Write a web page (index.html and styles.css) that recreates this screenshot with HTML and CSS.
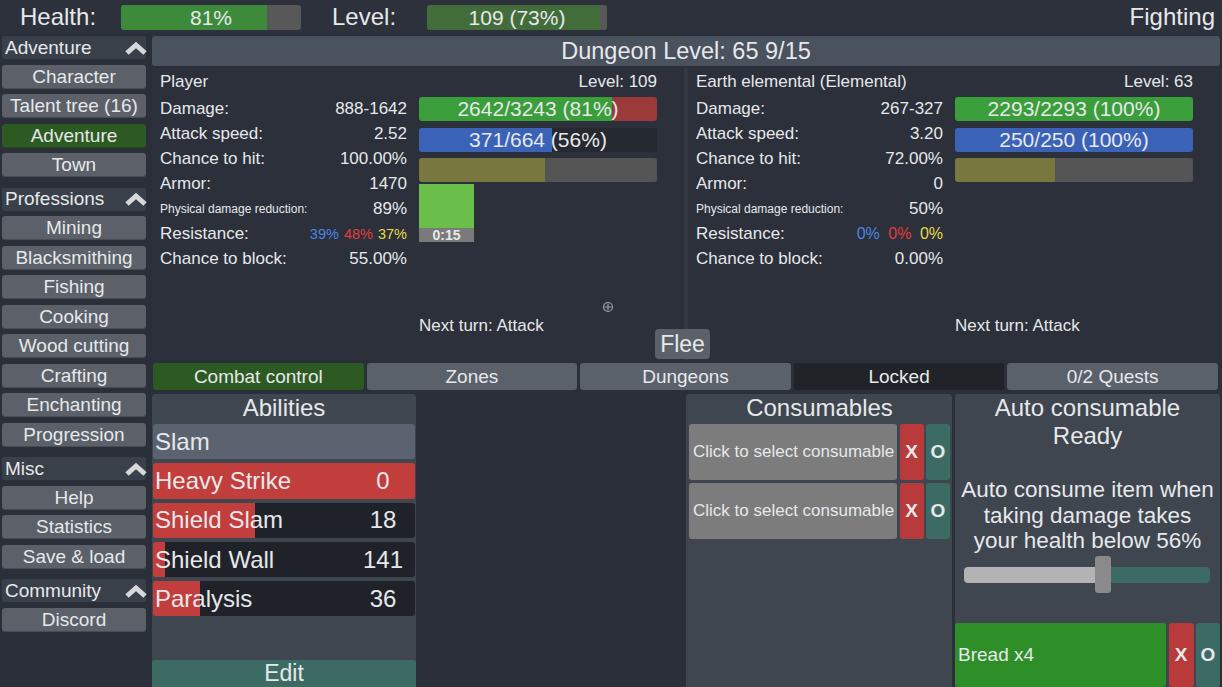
FILE: index.html
```html
<!DOCTYPE html>
<html lang="en">
<head>
    <meta charset="UTF-8">
    <title>Dungeon</title>
    <link rel="stylesheet" href="styles.css">
</head>
<body>
    <header class="topbar">
        <span class="top-label">Health:</span>
        <div class="top-bar"><div class="top-fill health" style="width: 81%"></div><span>81%</span></div>
        <span class="top-label level-label">Level:</span>
        <div class="top-bar"><div class="top-fill level" style="width: 96%"></div><span>109 (73%)</span></div>
        <span class="status">Fighting</span>
    </header>

    <div class="layout">
        <nav class="sidebar">
            <div class="side-head">Adventure <svg class="chevron" viewBox="0 0 24 14"><polyline points="3,12 12,4 21,12"/></svg></div>
            <button class="side-btn">Character</button>
            <button class="side-btn">Talent tree (16)</button>
            <button class="side-btn active">Adventure</button>
            <button class="side-btn">Town</button>

            <div class="side-head">Professions <svg class="chevron" viewBox="0 0 24 14"><polyline points="3,12 12,4 21,12"/></svg></div>
            <button class="side-btn">Mining</button>
            <button class="side-btn">Blacksmithing</button>
            <button class="side-btn">Fishing</button>
            <button class="side-btn">Cooking</button>
            <button class="side-btn">Wood cutting</button>
            <button class="side-btn">Crafting</button>
            <button class="side-btn">Enchanting</button>
            <button class="side-btn">Progression</button>

            <div class="side-head">Misc <svg class="chevron" viewBox="0 0 24 14"><polyline points="3,12 12,4 21,12"/></svg></div>
            <button class="side-btn">Help</button>
            <button class="side-btn">Statistics</button>
            <button class="side-btn">Save &amp; load</button>

            <div class="side-head">Community <svg class="chevron" viewBox="0 0 24 14"><polyline points="3,12 12,4 21,12"/></svg></div>
            <button class="side-btn">Discord</button>
        </nav>

        <main class="content">
            <div class="dungeon-title">Dungeon Level: 65 9/15</div>

            <section class="combat">
                <div class="fighter player">
                    <div class="fighter-head"><span>Player</span><span>Level: 109</span></div>
                    <div class="fighter-body">
                        <div class="stats">
                            <div class="stat"><span>Damage:</span><span>888-1642</span></div>
                            <div class="stat"><span>Attack speed:</span><span>2.52</span></div>
                            <div class="stat"><span>Chance to hit:</span><span>100.00%</span></div>
                            <div class="stat"><span>Armor:</span><span>1470</span></div>
                            <div class="stat"><span class="small">Physical damage reduction:</span><span>89%</span></div>
                            <div class="stat"><span>Resistance:</span><span class="res"><b class="cold">39%</b> <b class="fire">48%</b> <b class="light">37%</b></span></div>
                            <div class="stat"><span>Chance to block:</span><span>55.00%</span></div>
                        </div>
                        <div class="bars">
                            <div class="bar hp-lost" style="--fill: 81%">2642/3243 (81%)</div>
                            <div class="bar mana" style="--fill: 56%">371/664 (56%)</div>
                            <div class="bar swing" style="--fill: 53%"></div>
                            <div class="timer">
                                <div class="timer-fill"></div>
                                <div class="timer-label">0:15</div>
                            </div>
                            <div class="next-turn">Next turn: Attack</div>
                        </div>
                    </div>
                    <svg class="cursor" viewBox="0 0 12 12"><circle cx="6" cy="6" r="4.5"/><path d="M6 2.5v7M2.5 6h7"/></svg>
                </div>

                <div class="fighter enemy">
                    <div class="fighter-head"><span>Earth elemental (Elemental)</span><span>Level: 63</span></div>
                    <div class="fighter-body">
                        <div class="stats">
                            <div class="stat"><span>Damage:</span><span>267-327</span></div>
                            <div class="stat"><span>Attack speed:</span><span>3.20</span></div>
                            <div class="stat"><span>Chance to hit:</span><span>72.00%</span></div>
                            <div class="stat"><span>Armor:</span><span>0</span></div>
                            <div class="stat"><span class="small">Physical damage reduction:</span><span>50%</span></div>
                            <div class="stat"><span>Resistance:</span><span class="res wide"><b class="cold">0%</b> <b class="fire">0%</b> <b class="light">0%</b></span></div>
                            <div class="stat"><span>Chance to block:</span><span>0.00%</span></div>
                        </div>
                        <div class="bars">
                            <div class="bar hp-lost" style="--fill: 100%">2293/2293 (100%)</div>
                            <div class="bar mana" style="--fill: 100%">250/250 (100%)</div>
                            <div class="bar swing" style="--fill: 42%"></div>
                            <div class="next-turn">Next turn: Attack</div>
                        </div>
                    </div>
                </div>

                <button class="flee">Flee</button>
            </section>

            <div class="tabs">
                <button class="tab active">Combat control</button>
                <button class="tab">Zones</button>
                <button class="tab">Dungeons</button>
                <button class="tab locked">Locked</button>
                <button class="tab">0/2 Quests</button>
            </div>

            <section class="bottom">
                <div class="panel abilities">
                    <h2>Abilities</h2>
                    <div class="ability current"><span>Slam</span></div>
                    <div class="ability" style="--fill: 100%"><span>Heavy Strike</span><span class="cd">0</span></div>
                    <div class="ability" style="--fill: 39%"><span>Shield Slam</span><span class="cd">18</span></div>
                    <div class="ability" style="--fill: 4.6%"><span>Shield Wall</span><span class="cd">141</span></div>
                    <div class="ability" style="--fill: 18%"><span>Paralysis</span><span class="cd">36</span></div>
                    <button class="edit">Edit</button>
                </div>

                <div class="panel consumables">
                    <h2>Consumables</h2>
                    <div class="slot">
                        <button class="slot-item">Click to select consumable</button>
                        <button class="slot-x">X</button>
                        <button class="slot-o">O</button>
                    </div>
                    <div class="slot">
                        <button class="slot-item">Click to select consumable</button>
                        <button class="slot-x">X</button>
                        <button class="slot-o">O</button>
                    </div>
                </div>

                <div class="panel auto">
                    <h2>Auto consumable<br>Ready</h2>
                    <p class="auto-text">Auto consume item when<br>taking damage takes<br>your health below 56%</p>
                    <div class="slider" style="--fill: 55%">
                        <div class="slider-handle"></div>
                    </div>
                    <div class="slot bread">
                        <button class="slot-item">Bread x4</button>
                        <button class="slot-x">X</button>
                        <button class="slot-o">O</button>
                    </div>
                </div>
            </section>
        </main>
    </div>
</body>
</html>
```

FILE: styles.css
```css
* {
    box-sizing: border-box;
}
body {
    margin: 0;
    width: 1222px;
    height: 687px;
    overflow: hidden;
    background-color: #2a2f39;
    color: #e6e8ea;
    font-family: "Liberation Sans", Arial, sans-serif;
}
button {
    font-family: inherit;
    color: inherit;
    border: none;
    padding: 0;
    cursor: pointer;
}

/* top bar */
.topbar {
    height: 34px;
    display: flex;
    align-items: center;
    padding: 0 7px 0 20px;
    font-size: 24px;
    background-color: #2c313b;
}
.top-label {
    width: 101px;
}
.level-label {
    width: 95px;
    margin-left: 31px;
}
.top-bar {
    position: relative;
    width: 180px;
    height: 25px;
    margin-top: 1px;
    background-color: #585858;
    border-radius: 3px;
    overflow: hidden;
    display: flex;
    align-items: center;
    justify-content: center;
    font-size: 21px;
}
.top-fill {
    position: absolute;
    left: 0;
    top: 0;
    bottom: 0;
}
.top-fill.health {
    background-color: #3d8b3a;
}
.top-fill.level {
    background-color: #426c3a;
}
.top-bar span {
    position: relative;
}
.status {
    margin-left: auto;
}

/* layout */
.layout {
    display: flex;
    height: 653px;
}
.sidebar {
    width: 150px;
    padding: 2px 4px 0 2px;
    display: flex;
    flex-direction: column;
}
.side-head {
    height: 23px;
    margin-top: 10.5px;
    padding-left: 3px;
    display: flex;
    align-items: center;
    justify-content: space-between;
    font-size: 19px;
    background-color: #3a404a;
    border-radius: 2px;
}
.side-head:first-child {
    margin-top: 0;
}
.chevron {
    width: 24px;
    height: 14px;
    margin-right: -2px;
}
.chevron polyline {
    fill: none;
    stroke: #d6d8da;
    stroke-width: 5;
    stroke-linejoin: miter;
}
.side-btn {
    height: 24px;
    margin-top: 5.5px;
    font-size: 19px;
    background-color: #5b6069;
    border-radius: 3px;
    box-shadow: inset 0 -1px 0 rgba(0, 0, 0, 0.2);
}
.side-btn.active {
    background-color: #2d5a22;
}

.content {
    width: 1068px;
    margin-left: 2px;
    display: flex;
    flex-direction: column;
}
.dungeon-title {
    height: 30px;
    margin-top: 2px;
    display: flex;
    align-items: center;
    justify-content: center;
    font-size: 23.5px;
    background-color: #4a525e;
    border-radius: 3px;
}

/* combat */
.combat {
    position: relative;
    height: 292px;
    margin-top: 2px;
    display: flex;
    gap: 4px;
    background-color: #343a45;
}
.fighter {
    position: relative;
    flex: 1;
    padding: 0 27px 0 8px;
    display: flex;
    flex-direction: column;
    background-color: #2b303a;
    font-size: 17px;
}
.fighter-head {
    height: 27px;
    display: flex;
    align-items: center;
    justify-content: space-between;
}
.fighter-body {
    flex: 1;
    display: flex;
}
.stats {
    width: 247px;
    padding-top: 1px;
}
.stat {
    height: 25px;
    display: flex;
    align-items: center;
    justify-content: space-between;
}
.stat .small {
    font-size: 12px;
}
.res {
    font-size: 14.5px;
    word-spacing: 1px;
}
.res.wide {
    font-size: 16px;
    word-spacing: 4px;
}
.res b {
    font-weight: normal;
}
.cold {
    color: #4a86e2;
}
.fire {
    color: #e23c3c;
}
.light {
    color: #e6da48;
}
.bars {
    width: 238px;
    margin-left: 12px;
    padding-top: 2px;
    display: flex;
    flex-direction: column;
}
.bar {
    height: 24px;
    margin-bottom: 6.5px;
    display: flex;
    align-items: center;
    justify-content: center;
    font-size: 21px;
    border-radius: 3px;
}
.bar.hp-lost {
    background: linear-gradient(to right, #3a9e3a var(--fill), #9a3a3a var(--fill));
}
.bar.mana {
    background: linear-gradient(to right, #3a62b6 var(--fill), #252a30 var(--fill));
}
.bar.swing {
    background: linear-gradient(to right, #77773f var(--fill), #545454 var(--fill));
}
.timer {
    width: 55px;
    margin-top: -4.5px;
}
.timer-fill {
    height: 44px;
    background-color: #6abf4b;
}
.timer-label {
    height: 14px;
    line-height: 14px;
    text-align: center;
    font-size: 14px;
    font-weight: bold;
    background-color: #7a7a7a;
}
.next-turn {
    margin-top: auto;
    margin-bottom: 24px;
    line-height: 20px;
}
.cursor {
    position: absolute;
    left: 450px;
    top: 233px;
    width: 12px;
    height: 12px;
}
.cursor circle, .cursor path {
    fill: none;
    stroke: #9aa0a8;
    stroke-width: 1.2;
}
.flee {
    position: absolute;
    left: 503px;
    top: 261px;
    width: 55px;
    height: 30px;
    font-size: 23px;
    background-color: #5b6069;
    border-radius: 4px;
}

/* tabs */
.tabs {
    height: 27px;
    margin-top: 3px;
    padding: 0 2px 0 1px;
    display: flex;
    gap: 3px;
}
.tab {
    flex: 1;
    font-size: 19px;
    background-color: #5a616b;
    border-radius: 3px;
}
.tab.active {
    background-color: #2d5a22;
}
.tab.locked {
    background-color: #202428;
}

/* bottom panels */
.bottom {
    flex: 1;
    margin-top: 4px;
    display: flex;
}
.panel {
    display: flex;
    flex-direction: column;
    background-color: #3f464f;
    border-radius: 3px 3px 0 0;
}
.panel h2 {
    margin: 0;
    font-size: 24px;
    font-weight: normal;
    line-height: 28px;
    text-align: center;
}
.abilities {
    width: 264px;
    margin-right: auto;
}
.abilities h2 {
    height: 30px;
}
.ability {
    height: 35.3px;
    margin: 0 1px 4px;
    display: flex;
    align-items: center;
    justify-content: space-between;
    padding-left: 2px;
    font-size: 24px;
    border-radius: 3px;
    background: linear-gradient(to right, #c23e3d var(--fill), #1f2329 var(--fill));
}
.ability.current {
    background: #5b6371;
}
.cd {
    width: 40px;
    margin-right: 12px;
    text-align: center;
}
.edit {
    margin-top: auto;
    height: 27px;
    font-size: 23px;
    background-color: #3c6b64;
    border-radius: 3px 3px 0 0;
}

.consumables {
    width: 266px;
    padding: 0 2px 0 3px;
}
.consumables h2 {
    height: 30px;
}
.slot {
    height: 56px;
    margin-bottom: 3px;
    display: flex;
}
.slot-item {
    flex: 1;
    text-align: left;
    padding-left: 4px;
    font-size: 17px;
    background-color: #7c7c7c;
    border-radius: 3px;
}
.slot-x, .slot-o {
    width: 24px;
    margin-left: 2.5px;
    font-size: 19px;
    font-weight: bold;
    border-radius: 3px;
}
.slot-x {
    background-color: #b83a3a;
}
.slot-o {
    background-color: #3c6b64;
}

.auto {
    width: 265px;
    margin-left: 3px;
}
.auto-text {
    margin: 27px 0 0;
    font-size: 22.5px;
    line-height: 25.5px;
    text-align: center;
    white-space: nowrap;
}
.slider {
    position: relative;
    height: 16px;
    margin: 13px 10px 0 9px;
    border-radius: 4px;
    background: linear-gradient(to right, #b3b3b3 var(--fill), #3c6a64 var(--fill));
}
.slider-handle {
    position: absolute;
    left: calc(var(--fill) - 4px);
    top: -11px;
    width: 16px;
    height: 37px;
    background-color: #8a8a8a;
    border-radius: 3px;
}
.bread {
    margin-top: auto;
    margin-bottom: 0;
    height: 64px;
}
.bread .slot-item {
    font-size: 19px;
    padding-left: 3px;
    background-color: #2e8f29;
}
.bread .slot-x {
    width: 25px;
}
```
